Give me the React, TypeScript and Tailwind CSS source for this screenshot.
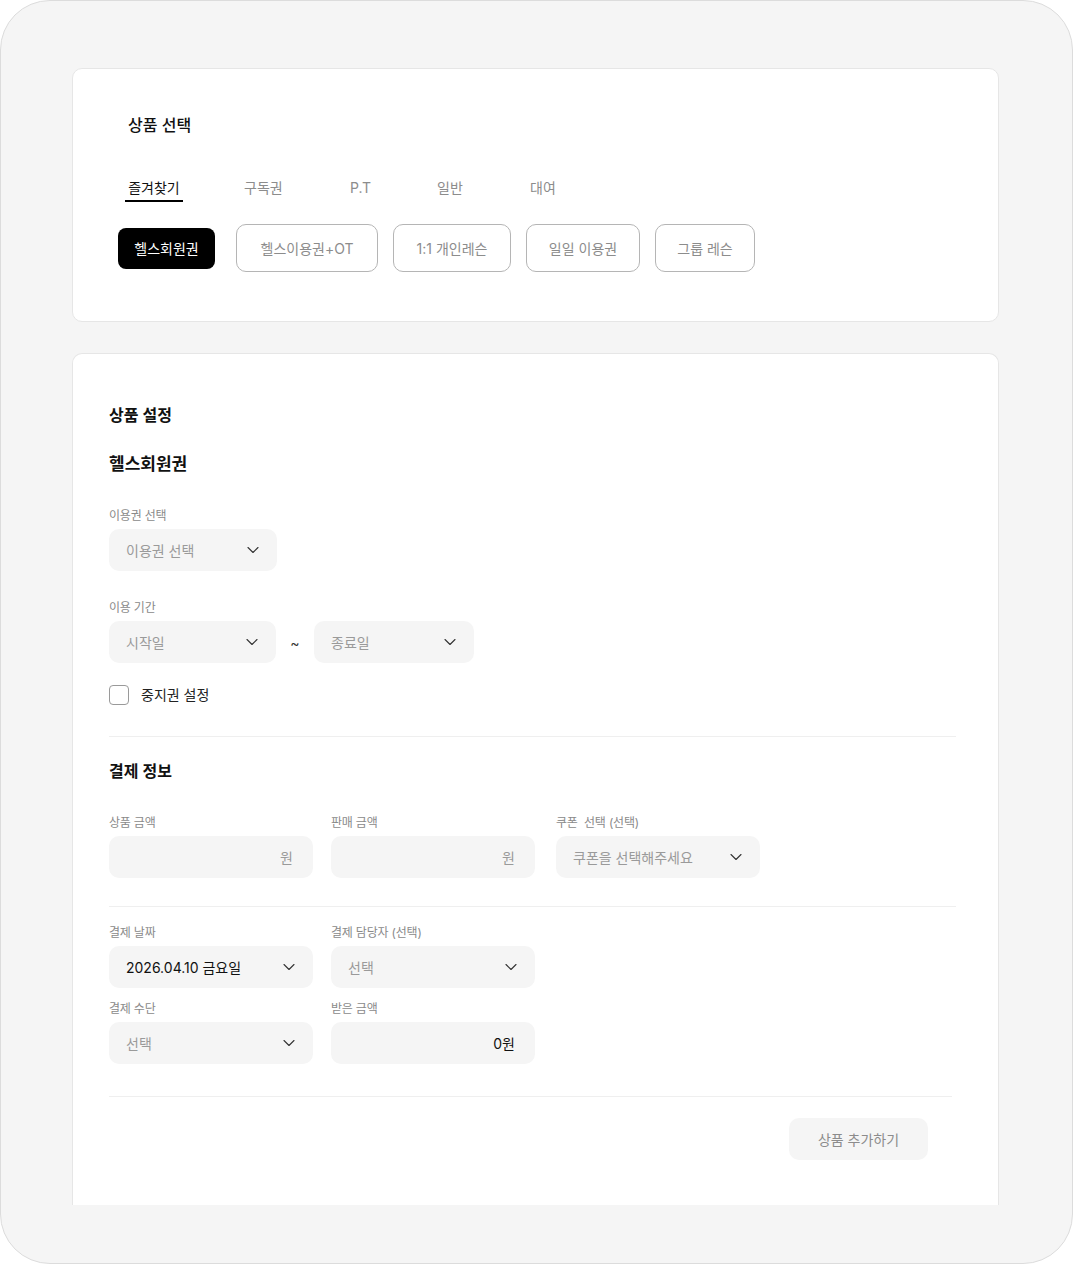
import { ChevronDown } from 'lucide-react'

const font = { fontFamily: 'Inter, "Noto Sans CJK KR", "Noto Sans", sans-serif' }

// tab label + the width of its slot (text left-aligned)
const tabs = [
  { label: '구독권', w: 'w-[106px]' },
  { label: 'P.T', w: 'w-[87px]' },
  { label: '일반', w: 'w-[93px]' },
  { label: '대여', w: 'w-[60px]' },
]

const chips = [
  { label: '헬스이용권+OT', w: 'w-[142px]' },
  { label: '1:1 개인레슨', w: 'w-[118px]' },
  { label: '일일 이용권', w: 'w-[114px]' },
  { label: '그룹 레슨', w: 'w-[100px]' },
]

function Label({ children }: { children: React.ReactNode }) {
  return <div className="text-[12px] leading-4 text-[#8a8a8a] tracking-[-0.2px]">{children}</div>
}

function SelectBox({
  text,
  w,
  filled = false,
}: {
  text: string
  w: string
  filled?: boolean
}) {
  return (
    <div
      className={`${w} h-[42px] rounded-[10px] bg-[#f5f5f5] flex items-center justify-between pl-[17px] pr-[14px]`}
    >
      <span className={`text-[14px] ${filled ? 'text-[#111]' : 'text-[#9a9a9a]'}`}>{text}</span>
      <ChevronDown className="w-5 h-5 text-[#333]" strokeWidth={1.3} />
    </div>
  )
}

function AmountBox({ text, dark = false }: { text: string; dark?: boolean }) {
  return (
    <div className="w-[204px] h-[42px] rounded-[10px] bg-[#f5f5f5] flex items-center justify-end pr-[20px]">
      <span className={`text-[14px] ${dark ? 'text-[#111]' : 'text-[#9a9a9a]'}`}>{text}</span>
    </div>
  )
}

export default function App() {
  return (
    <div style={font} className="w-[1073px] h-[1264px] bg-white">
      <div className="w-full h-full rounded-[50px] border border-[#dcdcdc] bg-[#f5f5f5] pt-[67px] pl-[71px] pr-[73px] pb-[58px]">
        <div className="h-full overflow-hidden flex flex-col gap-[31px]">
          {/* 상품 선택 */}
          <div className="shrink-0 h-[254px] bg-white rounded-[10px] border border-[#e6e6e6] pt-[44px]">
            <div className="pl-[55px] text-[16px] leading-6 font-medium text-[#111]">상품 선택</div>
            <div className="mt-[41px] pl-[52px] flex">
              <div className="w-[58px] pb-[2px] text-center text-[14px] leading-5 border-b-2 border-black text-[#111]">
                즐겨찾기
              </div>
              <div className="ml-[61px] flex">
                {tabs.map((t) => (
                  <div key={t.label} className={`${t.w} pb-[2px] text-[14px] leading-5 text-[#8c8c8c]`}>
                    {t.label}
                  </div>
                ))}
              </div>
            </div>
            <div className="mt-[22px] pl-[45px] flex items-center">
              <div className="w-[97px] h-[41px] rounded-[8px] bg-black text-white text-[14px] flex items-center justify-center mr-[21px]">
                헬스회원권
              </div>
              <div className="flex gap-[15px]">
                {chips.map((c) => (
                  <div
                    key={c.label}
                    className={`${c.w} h-[48px] rounded-[10px] border border-[#b5b5b5] text-[14px] text-[#8c8c8c] flex items-center justify-center`}
                  >
                    {c.label}
                  </div>
                ))}
              </div>
            </div>
          </div>

          {/* 상품 설정 */}
          <div className="flex-1 bg-white rounded-t-[10px] border border-b-0 border-[#e6e6e6] pt-[49px] pl-[36px] pr-[42px]">
            <div className="text-[16px] leading-6 font-semibold text-[#111]">상품 설정</div>
            <div className="mt-[24px] text-[17px] leading-[26px] font-semibold text-[#111]">헬스회원권</div>

            <div className="mt-[31px]">
              <Label>이용권 선택</Label>
              <div className="mt-[5px]">
                <SelectBox text="이용권 선택" w="w-[168px]" />
              </div>
            </div>

            <div className="mt-[29px]">
              <Label>이용 기간</Label>
              <div className="mt-[5px] flex items-center">
                <SelectBox text="시작일" w="w-[167px]" />
                <span className="w-[38px] text-center text-[14px] text-[#333]">~</span>
                <SelectBox text="종료일" w="w-[160px]" />
              </div>
            </div>

            <div className="mt-[22px] flex items-center gap-[12px]">
              <div className="w-[20px] h-[20px] rounded-[4px] border border-[#9a9a9a]" />
              <span className="text-[14px] leading-5 text-[#222]">중지권 설정</span>
            </div>

            <div className="mt-[31px] h-px bg-[#efefef]" />

            <div className="mt-[22px] text-[16px] leading-6 font-semibold text-[#111]">결제 정보</div>

            <div className="mt-[32px] flex gap-[18px]">
              <div>
                <Label>상품 금액</Label>
                <div className="mt-[5px]">
                  <AmountBox text="원" />
                </div>
              </div>
              <div>
                <Label>판매 금액</Label>
                <div className="mt-[5px]">
                  <AmountBox text="원" />
                </div>
              </div>
              <div className="ml-[3px]">
                <Label>쿠폰&nbsp; 선택 (선택)</Label>
                <div className="mt-[5px]">
                  <SelectBox text="쿠폰을 선택해주세요" w="w-[204px]" />
                </div>
              </div>
            </div>

            <div className="mt-[28px] h-px bg-[#efefef]" />

            <div className="mt-[18px] grid grid-cols-[204px_204px] gap-x-[18px] gap-y-[13px]">
              <div>
                <Label>결제 날짜</Label>
                <div className="mt-[5px]">
                  <SelectBox text="2026.04.10 금요일" w="w-[204px]" filled />
                </div>
              </div>
              <div>
                <Label>결제 담당자 (선택)</Label>
                <div className="mt-[5px]">
                  <SelectBox text="선택" w="w-[204px]" />
                </div>
              </div>
              <div>
                <Label>결제 수단</Label>
                <div className="mt-[5px]">
                  <SelectBox text="선택" w="w-[204px]" />
                </div>
              </div>
              <div>
                <Label>받은 금액</Label>
                <div className="mt-[5px]">
                  <AmountBox text="0원" dark />
                </div>
              </div>
            </div>

            <div className="mt-[32px] mr-[4px] h-px bg-[#efefef]" />

            <div className="mt-[21px] flex justify-end pr-[28px]">
              <div className="w-[139px] h-[42px] rounded-[10px] bg-[#f5f5f5] text-[14px] text-[#8c8c8c] flex items-center justify-center">
                상품 추가하기
              </div>
            </div>
          </div>
        </div>
      </div>
    </div>
  )
}
